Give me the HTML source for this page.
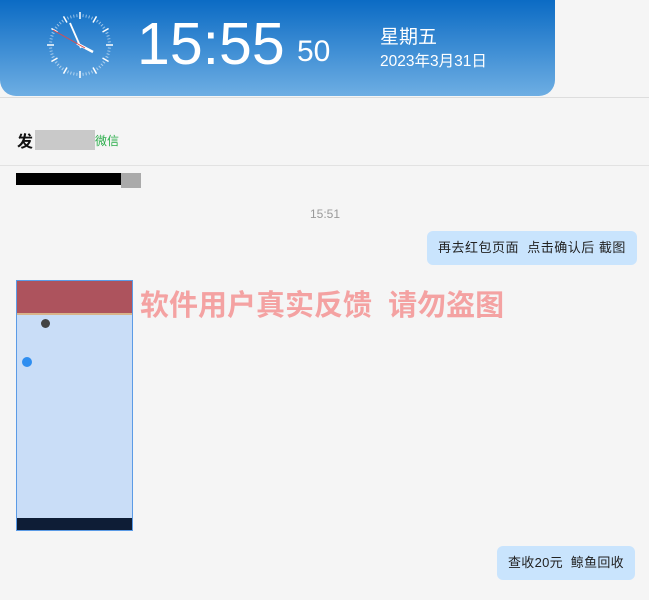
<!DOCTYPE html>
<html><head><meta charset="utf-8"><style>
body{margin:0;width:649px;height:600px;background:#f5f5f5;font-family:"Liberation Sans","Noto Sans CJK SC",sans-serif;position:relative;overflow:hidden}
.a{position:absolute}
.hdr{left:0;top:0;width:555px;height:96px;background:linear-gradient(#0b6bc4,#6eaee3);border-radius:0 0 16px 16px}
.bub{background:#c9e4fd;border-radius:6px;font-size:13px;color:#222;line-height:34px;padding:0 11px;white-space:nowrap;letter-spacing:.5px}
</style></head><body>
<div class="a hdr"></div>
<svg class="a" style="left:44px;top:9px" width="72" height="72" viewBox="-36 -36 72 72">
<g stroke="#fff" stroke-opacity=".55" stroke-width="1">
<line x1="0" y1="-31" x2="0" y2="-28" transform="rotate(6)"/><line x1="0" y1="-31" x2="0" y2="-28" transform="rotate(12)"/><line x1="0" y1="-31" x2="0" y2="-28" transform="rotate(18)"/><line x1="0" y1="-31" x2="0" y2="-28" transform="rotate(24)"/>
<line x1="0" y1="-31" x2="0" y2="-28" transform="rotate(36)"/><line x1="0" y1="-31" x2="0" y2="-28" transform="rotate(42)"/><line x1="0" y1="-31" x2="0" y2="-28" transform="rotate(48)"/><line x1="0" y1="-31" x2="0" y2="-28" transform="rotate(54)"/>
<line x1="0" y1="-31" x2="0" y2="-28" transform="rotate(66)"/><line x1="0" y1="-31" x2="0" y2="-28" transform="rotate(72)"/><line x1="0" y1="-31" x2="0" y2="-28" transform="rotate(78)"/><line x1="0" y1="-31" x2="0" y2="-28" transform="rotate(84)"/>
<line x1="0" y1="-31" x2="0" y2="-28" transform="rotate(96)"/><line x1="0" y1="-31" x2="0" y2="-28" transform="rotate(102)"/><line x1="0" y1="-31" x2="0" y2="-28" transform="rotate(108)"/><line x1="0" y1="-31" x2="0" y2="-28" transform="rotate(114)"/>
<line x1="0" y1="-31" x2="0" y2="-28" transform="rotate(126)"/><line x1="0" y1="-31" x2="0" y2="-28" transform="rotate(132)"/><line x1="0" y1="-31" x2="0" y2="-28" transform="rotate(138)"/><line x1="0" y1="-31" x2="0" y2="-28" transform="rotate(144)"/>
<line x1="0" y1="-31" x2="0" y2="-28" transform="rotate(156)"/><line x1="0" y1="-31" x2="0" y2="-28" transform="rotate(162)"/><line x1="0" y1="-31" x2="0" y2="-28" transform="rotate(168)"/><line x1="0" y1="-31" x2="0" y2="-28" transform="rotate(174)"/>
<line x1="0" y1="-31" x2="0" y2="-28" transform="rotate(186)"/><line x1="0" y1="-31" x2="0" y2="-28" transform="rotate(192)"/><line x1="0" y1="-31" x2="0" y2="-28" transform="rotate(198)"/><line x1="0" y1="-31" x2="0" y2="-28" transform="rotate(204)"/>
<line x1="0" y1="-31" x2="0" y2="-28" transform="rotate(216)"/><line x1="0" y1="-31" x2="0" y2="-28" transform="rotate(222)"/><line x1="0" y1="-31" x2="0" y2="-28" transform="rotate(228)"/><line x1="0" y1="-31" x2="0" y2="-28" transform="rotate(234)"/>
<line x1="0" y1="-31" x2="0" y2="-28" transform="rotate(246)"/><line x1="0" y1="-31" x2="0" y2="-28" transform="rotate(252)"/><line x1="0" y1="-31" x2="0" y2="-28" transform="rotate(258)"/><line x1="0" y1="-31" x2="0" y2="-28" transform="rotate(264)"/>
<line x1="0" y1="-31" x2="0" y2="-28" transform="rotate(276)"/><line x1="0" y1="-31" x2="0" y2="-28" transform="rotate(282)"/><line x1="0" y1="-31" x2="0" y2="-28" transform="rotate(288)"/><line x1="0" y1="-31" x2="0" y2="-28" transform="rotate(294)"/>
<line x1="0" y1="-31" x2="0" y2="-28" transform="rotate(306)"/><line x1="0" y1="-31" x2="0" y2="-28" transform="rotate(312)"/><line x1="0" y1="-31" x2="0" y2="-28" transform="rotate(318)"/><line x1="0" y1="-31" x2="0" y2="-28" transform="rotate(324)"/>
<line x1="0" y1="-31" x2="0" y2="-28" transform="rotate(336)"/><line x1="0" y1="-31" x2="0" y2="-28" transform="rotate(342)"/><line x1="0" y1="-31" x2="0" y2="-28" transform="rotate(348)"/><line x1="0" y1="-31" x2="0" y2="-28" transform="rotate(354)"/>
</g>
<g stroke="#fff" stroke-width="1.5">
<line x1="0" y1="-33" x2="0" y2="-26"/><line x1="0" y1="-33" x2="0" y2="-26" transform="rotate(30)"/><line x1="0" y1="-33" x2="0" y2="-26" transform="rotate(60)"/><line x1="0" y1="-33" x2="0" y2="-26" transform="rotate(90)"/><line x1="0" y1="-33" x2="0" y2="-26" transform="rotate(120)"/><line x1="0" y1="-33" x2="0" y2="-26" transform="rotate(150)"/><line x1="0" y1="-33" x2="0" y2="-26" transform="rotate(180)"/><line x1="0" y1="-33" x2="0" y2="-26" transform="rotate(210)"/><line x1="0" y1="-33" x2="0" y2="-26" transform="rotate(240)"/><line x1="0" y1="-33" x2="0" y2="-26" transform="rotate(270)"/><line x1="0" y1="-33" x2="0" y2="-26" transform="rotate(300)"/><line x1="0" y1="-33" x2="0" y2="-26" transform="rotate(330)"/>
</g>
<line x1="-3" y1="-1.5" x2="13" y2="7" stroke="#fff" stroke-width="2.5"/>
<line x1="1" y1="3" x2="-10" y2="-22" stroke="#fff" stroke-width="1.8"/>
<line x1="5" y1="3" x2="-27" y2="-15" stroke="#e04a4a" stroke-width="1"/>
</svg>
<div class="a" style="left:137px;top:11px;font-size:59px;color:#fff;line-height:66px">15:55</div>
<div class="a" style="left:297px;top:35px;font-size:30px;color:#fff;line-height:34px">50</div>
<div class="a" style="left:380px;top:22px;font-size:19px;color:#fff">星期五</div>
<div class="a" style="left:380px;top:49px;font-size:15.5px;color:#fff">2023年3月31日</div>
<div class="a" style="left:0;top:97px;width:649px;height:1px;background:#ddd"></div>
<div class="a" style="left:17px;top:128px;font-size:16px;font-weight:bold;color:#111">发</div>
<div class="a" style="left:35px;top:130px;width:60px;height:20px;background:#c9c9c9"></div>
<div class="a" style="left:95px;top:132px;font-size:12px;color:#2aad4a">微信</div>
<div class="a" style="left:0;top:165px;width:649px;height:1px;background:#e2e2e2"></div>
<div class="a" style="left:16px;top:173px;width:116px;height:12px;background:#000"></div>
<div class="a" style="left:121px;top:173px;width:20px;height:15px;background:#aaa"></div>
<div class="a" style="left:310px;top:207px;font-size:12px;color:#999">15:51</div>
<div class="a bub" style="left:427px;top:231px">再去红包页面&nbsp; 点击确认后 截图</div>
<div class="a" style="left:16px;top:280px;width:115px;height:249px;border:1px solid #5b9be6;background:#c9ddf7;overflow:hidden">
<div style="height:32px;background:#ad535d;border-bottom:2px solid #d9b48a"></div>
<div style="position:absolute;left:24px;top:38px;width:9px;height:9px;border-radius:50%;background:#444"></div>
<div style="position:absolute;left:5px;top:76px;width:10px;height:10px;border-radius:50%;background:#2f8ef0"></div>
<div style="position:absolute;left:0;bottom:0;width:115px;height:12px;background:#0e1d36"></div>
</div>
<div class="a" style="left:140px;top:282px;font-size:29px;font-weight:bold;color:#f4a2a2;white-space:nowrap">软件用户真实反馈&nbsp; 请勿盗图</div>
<div class="a bub" style="left:497px;top:546px;letter-spacing:.3px">查收20元&nbsp; 鲸鱼回收</div>
</body></html>
